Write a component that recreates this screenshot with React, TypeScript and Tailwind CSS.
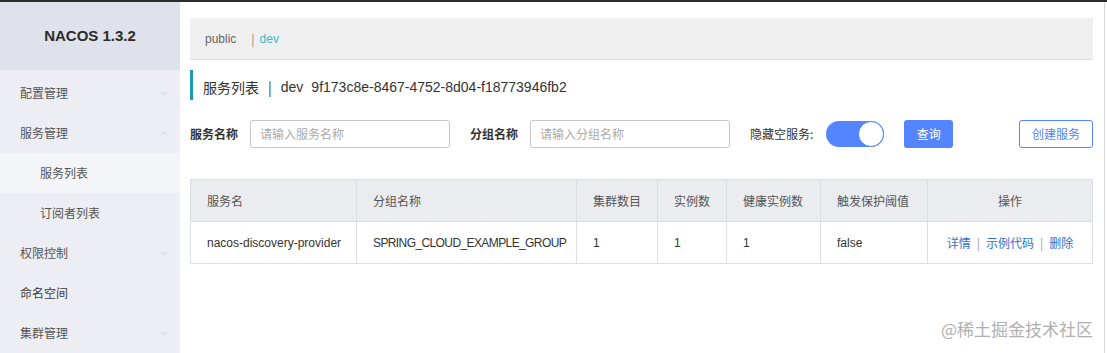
import { ChevronDown, ChevronUp } from "lucide-react";

const font = { fontFamily: '"Liberation Sans", "Noto Sans CJK SC", sans-serif' };

const menu = [
  { name: "配置管理", level: 1, arrow: "down" },
  { name: "服务管理", level: 1, arrow: "up" },
  { name: "服务列表", level: 2, active: true },
  { name: "订阅者列表", level: 2 },
  { name: "权限控制", level: 1, arrow: "down" },
  { name: "命名空间", level: 1, dark: true },
  { name: "集群管理", level: 1, arrow: "down" },
];

const columns = [
  { title: "服务名", w: "w-[166px]" },
  { title: "分组名称", w: "w-[220px]" },
  { title: "集群数目", w: "w-[81px]" },
  { title: "实例数", w: "w-[69px]" },
  { title: "健康实例数", w: "w-[94px]" },
  { title: "触发保护阈值", w: "w-[107px]" },
  { title: "操作", w: "flex-1", center: true },
];

const row = ["nacos-discovery-provider", "SPRING_CLOUD_EXAMPLE_GROUP", "1", "1", "1", "false"];

export default function App() {
  return (
    <div
      className="w-[1107px] h-[353px] overflow-hidden flex flex-col bg-white text-[#333]"
      style={{ fontFamily: '"Noto Sans CJK SC", "Liberation Sans", sans-serif' }}
    >
      <div className="h-[2px] bg-[#2e2e2e] shrink-0" />
      <div className="flex flex-1 min-h-0">
        {/* sidebar */}
        <aside className="w-[180px] shrink-0 bg-[#eceef3] flex flex-col">
          <div className="h-[68px] bg-[#dfe2ea] flex items-center justify-center">
            <span className="text-[15px] font-bold text-[#2b2b2b]" style={font}>
              NACOS 1.3.2
            </span>
          </div>
          <div className="flex flex-col pt-[3px]">
            {menu.map((m) => (
              <div
                key={m.name}
                className={`h-[40px] flex items-center justify-between pr-[10px] text-[12px] ${
                  m.level === 2 ? "pl-[40px]" : "pl-[20px]"
                } ${m.active ? "bg-[#f4f5f8]" : ""} ${m.dark ? "text-[#3a3a3a]" : "text-[#555]"}`}
              >
                <span>{m.name}</span>
                {m.arrow === "down" && <ChevronDown size={11} strokeWidth={1} className="text-[#aaa]" />}
                {m.arrow === "up" && <ChevronUp size={11} strokeWidth={1} className="text-[#aaa]" />}
              </div>
            ))}
          </div>
        </aside>

        {/* main */}
        <main className="flex-1 pl-[10px] pr-[14px] pt-[16px] relative">
          <div className="h-[42px] bg-[#efefef] border-b border-[#dcdcdc] flex items-center pl-[15px] text-[12px]">
            <span className="text-[#666]" style={font}>public</span>
            <span className="ml-[15px] text-[#888]">|</span>
            <span className="ml-[5px] text-[#3dbbd0]" style={font}>dev</span>
          </div>

          <div className="mt-[10px] h-[30px] border-l-[3px] border-[#1c9bb0] flex items-center pl-[10px] pt-[5px] text-[14px] text-[#333]">
            <span>服务列表</span>
            <span className="mx-[9px]">|</span>
            <span style={font}>dev</span>
            <span className="ml-[8px]" style={font}>9f173c8e-8467-4752-8d04-f18773946fb2</span>
          </div>

          <div className="mt-[20px] flex items-center h-[28px] text-[12px]">
            <span className="font-bold text-[#333] w-[60px]">服务名称</span>
            <div className="w-[200px] h-[28px] border border-[#c4c6cf] rounded-[3px] flex items-center pl-[9px] text-[#aaa]">
              请输入服务名称
            </div>
            <span className="font-bold text-[#333] ml-[20px] w-[60px]">分组名称</span>
            <div className="w-[200px] h-[28px] border border-[#c4c6cf] rounded-[3px] flex items-center pl-[9px] text-[#aaa]">
              请输入分组名称
            </div>
            <span className="ml-[20px] text-[#333]">隐藏空服务:</span>
            <div className="ml-[13px] w-[58px] h-[26px] rounded-full bg-[#5584ff] relative">
              <div className="absolute right-0 top-0 w-[26px] h-[26px] rounded-full bg-white border border-[#5584ff]" />
            </div>
            <button className="ml-[20px] w-[49px] h-[28px] rounded-[3px] bg-[#5584ff] text-white text-[12px]">
              查询
            </button>
            <button className="ml-auto w-[74px] h-[28px] rounded-[3px] border border-[#5584ff] bg-white text-[#5584ff] text-[12px]">
              创建服务
            </button>
          </div>

          <div className="mt-[31px] border border-[#dcdee3] text-[12px]">
            <div className="flex h-[42px] bg-[#ebecf0] border-b border-[#dcdee3] text-[#555]">
              {columns.map((c, i) => (
                <div
                  key={c.title}
                  className={`${c.w} flex items-center ${c.center ? "justify-center" : "pl-[16px]"} ${
                    i < columns.length - 1 ? "border-r border-[#dcdee3]" : ""
                  }`}
                >
                  {c.title}
                </div>
              ))}
            </div>
            <div className="flex h-[41px] bg-white text-[#333]">
              {row.map((v, i) => (
                <div
                  key={i}
                  className={`${columns[i].w} flex items-center pl-[16px] border-r border-[#dcdee3] ${
                    i === 1 ? "tracking-[-0.6px]" : ""
                  }`}
                  style={font}
                >
                  {v}
                </div>
              ))}
              <div className="flex-1 flex items-center justify-center text-[#2f6fcf]">
                <span>详情</span>
                <span className="mx-[6px] text-[#999]">|</span>
                <span>示例代码</span>
                <span className="mx-[6px] text-[#999]">|</span>
                <span>删除</span>
              </div>
            </div>
          </div>

          <div className="absolute right-[14px] bottom-[12px] text-[17px] text-[#b0b0b0]">@稀土掘金技术社区</div>
          <div className="absolute right-[2px] top-0 bottom-0 w-px bg-[#d6d6d6]" />
        </main>
      </div>
    </div>
  );
}
